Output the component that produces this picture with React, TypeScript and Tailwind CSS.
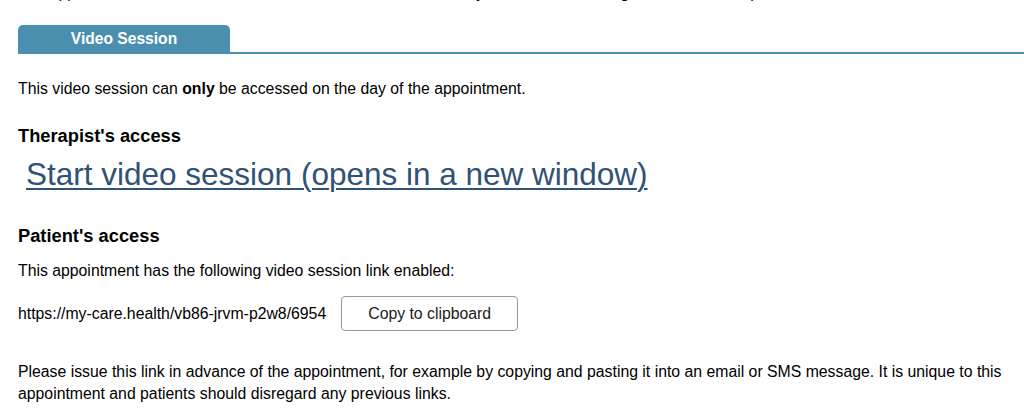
import { FC } from 'react'

const App: FC = () => {
  return (
    <div
      className="w-[1024px] h-[414px] overflow-hidden bg-white text-black"
      style={{ fontFamily: '"Liberation Sans", Arial, Helvetica, sans-serif' }}
    >
      {/* previous line of the page, cut off at the top */}
      <div className="h-[4px] overflow-hidden px-[18px]">
        <p className="-mt-[18px] text-[15.8px] leading-[22px] whitespace-nowrap">
          The appointment details listed below were entered for this client by the team, so the regular session is kept.
        </p>
      </div>

      <div className="mt-[21px] ml-[18px] flex items-end border-b-2 border-[#4a90b0]">
        <div className="w-[212px] h-[27px] rounded-t-[5px] bg-[#4b8fae] flex items-center justify-center text-white font-bold text-[15.6px]">
          Video Session
        </div>
      </div>

      <div className="px-[18px]">
        <p className="mt-[24px] text-[15.8px] leading-[22px]">
          This video session can <b>only</b> be accessed on the day of the appointment.
        </p>

        <h3 className="mt-[25px] text-[18.3px] leading-[22px] font-bold">Therapist's access</h3>
        <a
          href="#"
          className="mt-[9px] ml-[8px] inline-block text-[31.5px] leading-[36px] text-[#2f5275] underline decoration-[2px] underline-offset-[3px]"
        >
          Start video session (opens in a new window)
        </a>

        <h3 className="mt-[33px] text-[18.3px] leading-[22px] font-bold">Patient's access</h3>
        <p className="mt-[13px] text-[15.8px] leading-[22px]">
          This appointment has the following video session link enabled:
        </p>

        <div className="mt-[14px] flex items-center gap-[15px]">
          <span className="text-[15.8px] leading-[22px]">https://my-care.health/vb86-jrvm-p2w8/6954</span>
          <button className="w-[177px] h-[35px] rounded-[4px] border border-[#9a9a9a] bg-white text-[15.8px] text-[#1a1a1a]">
            Copy to clipboard
          </button>
        </div>

        <p className="mt-[30px] text-[15.8px] leading-[22px]">
          Please issue this link in advance of the appointment, for example by copying and pasting it into an email or SMS
          message. It is unique to this appointment and patients should disregard any previous links.
        </p>
      </div>
    </div>
  )
}

export default App
